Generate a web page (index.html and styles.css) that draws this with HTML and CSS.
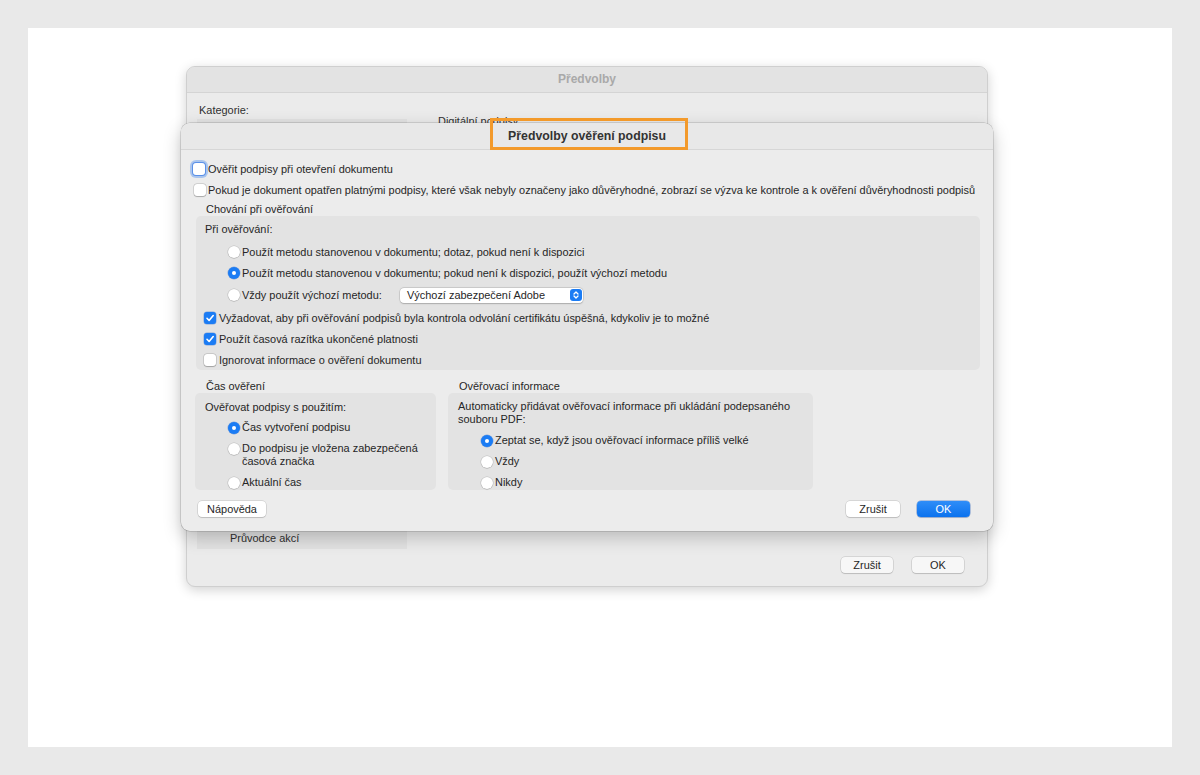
FILE: index.html
```html
<!DOCTYPE html>
<html lang="cs">
<head>
<meta charset="utf-8">
<title>Předvolby ověření podpisu</title>
<link rel="stylesheet" href="styles.css">
</head>
<body>
<div class="page">
  <div class="shot">
    <div class="win">
      <div class="win-title">Předvolby</div>
      <div class="win-body">
        <div class="win-cols">
          <div class="win-left">
            <div class="lbl">Kategorie:</div>
            <div class="catlist"><div class="cat">Průvodce akcí</div></div>
          </div>
          <div class="win-right"><div class="pane-title">Digitální podpisy</div></div>
        </div>
        <div class="win-buttons"><div class="btn btn-inactive">Zrušit</div><div class="btn btn-inactive">OK</div></div>
      </div>
    </div>

    <div class="sheet">
      <div class="sheet-title">Předvolby ověření podpisu<div class="hl"></div></div>
      <div class="sheet-body">
        <div class="row"><span class="cb focus"></span><span>Ověřit podpisy při otevření dokumentu</span></div>
        <div class="row"><span class="cb cb-2"></span><span>Pokud je dokument opatřen platnými podpisy, které však nebyly označeny jako důvěryhodné, zobrazí se výzva ke kontrole a k ověření důvěryhodnosti podpisů</span></div>
        <div class="sec-label">Chování při ověřování</div>
        <div class="group">
          <div class="glabel">Při ověřování:</div>
          <div class="row ind"><span class="rb"></span><span>Použít metodu stanovenou v dokumentu; dotaz, pokud není k dispozici</span></div>
          <div class="row ind"><span class="rb on"></span><span>Použít metodu stanovenou v dokumentu; pokud není k dispozici, použít výchozí metodu</span></div>
          <div class="row ind row-pop"><span class="rb"></span><span class="plabel">Vždy použít výchozí metodu:</span>
            <div class="popup"><span>Výchozí zabezpečení Adobe</span><span class="chev"><svg viewBox="0 0 12 12" width="12" height="12"><path d="M4 5 L6 3 L8 5 M4 7 L6 9 L8 7" fill="none" stroke="#fff" stroke-width="1.3" stroke-linecap="round" stroke-linejoin="round"/></svg></span></div>
          </div>
          <div class="row"><span class="cb on"><svg viewBox="0 0 12 12" width="12" height="12"><path d="M3 6.3 L5.1 8.5 L9.2 3.5" fill="none" stroke="#fff" stroke-width="1.6" stroke-linecap="round" stroke-linejoin="round"/></svg></span><span>Vyžadovat, aby při ověřování podpisů byla kontrola odvolání certifikátu úspěšná, kdykoliv je to možné</span></div>
          <div class="row"><span class="cb on"><svg viewBox="0 0 12 12" width="12" height="12"><path d="M3 6.3 L5.1 8.5 L9.2 3.5" fill="none" stroke="#fff" stroke-width="1.6" stroke-linecap="round" stroke-linejoin="round"/></svg></span><span>Použít časová razítka ukončené platnosti</span></div>
          <div class="row"><span class="cb"></span><span>Ignorovat informace o ověření dokumentu</span></div>
        </div>

        <div class="lower">
          <div class="col col-left">
            <div class="col-title">Čas ověření</div>
            <div class="sgroup">
              <div class="sg-label">Ověřovat podpisy s použitím:</div>
              <div class="srow first"><span class="rb on"></span><span>Čas vytvoření podpisu</span></div>
              <div class="srow"><span class="rb"></span><span>Do podpisu je vložena zabezpečená<br>časová značka</span></div>
              <div class="srow"><span class="rb"></span><span>Aktuální čas</span></div>
            </div>
          </div>
          <div class="col col-right">
            <div class="col-title">Ověřovací informace</div>
            <div class="sgroup">
              <div class="sg-label2">Automaticky přidávat ověřovací informace při ukládání podepsaného<br>souboru PDF:</div>
              <div class="srow"><span class="rb on"></span><span>Zeptat se, když jsou ověřovací informace příliš velké</span></div>
              <div class="srow"><span class="rb"></span><span>Vždy</span></div>
              <div class="srow"><span class="rb"></span><span>Nikdy</span></div>
            </div>
          </div>
        </div>

        <div class="footer">
          <div class="btn btn-help">Nápověda</div>
          <div class="btn-group">
            <div class="btn btn-cancel">Zrušit</div>
            <div class="btn btn-ok">OK</div>
          </div>
        </div>
      </div>
    </div>
  </div>
</div>
</body>
</html>
```

FILE: styles.css
```css
* { box-sizing: border-box; margin: 0; padding: 0; }

body {
  background: #e9e9e9;
  font-family: "Liberation Sans", Arial, sans-serif;
  font-size: 10.95px;
  color: #262626;
}

.page {
  margin: 28px;
  width: 1144px;
  height: 719px;
  background: #fff;
  padding: 32px 0 0 151px;
}

.shot {
  position: relative;
  width: 819px;
  height: 536px;
  background: #fff;
  padding: 6px 0 0 7px;
}

/* Outer window */
.win {
  width: 802px;
  height: 521px;
  border-radius: 9px;
  background: #ebebeb;
  border: 1px solid #cfcfcf;
  box-shadow: 0 3px 12px rgba(0, 0, 0, 0.18);
  display: flex;
  flex-direction: column;
  overflow: hidden;
}

.win-title {
  flex: none;
  height: 26px;
  background: #e3e3e3;
  border-bottom: 1px solid #d4d4d4;
  text-align: center;
  font-weight: bold;
  font-size: 12px;
  line-height: 25px;
  color: #a9a9a9;
}

.win-body {
  flex: 1;
  display: flex;
  flex-direction: column;
  padding: 10px 23px 13px 10px;
}

.win-cols {
  flex: 1;
  display: flex;
}

.win-left {
  width: 210px;
  display: flex;
  flex-direction: column;
}

.lbl {
  padding-left: 2px;
  line-height: 14px;
  color: #303030;
}

.catlist {
  flex: 1;
  margin-top: 2px;
  background: #e2e2e2;
  display: flex;
  flex-direction: column;
  justify-content: flex-end;
  padding: 0 0 4px 33px;
}

.cat {
  line-height: 14px;
  color: #303030;
}

.win-right {
  padding: 11px 0 0 31px;
}

.pane-title {
  line-height: 14px;
  color: #303030;
}

.win-buttons {
  display: flex;
  justify-content: flex-end;
  gap: 19px;
  margin-top: 8px;
}

/* Buttons */
.btn {
  height: 16px;
  line-height: 16px;
  text-align: center;
  background: #fff;
  border-radius: 4px;
  box-shadow: 0 0 0 0.5px rgba(0, 0, 0, 0.18), 0 1px 1px rgba(0, 0, 0, 0.12);
  color: #262626;
}

.btn-inactive {
  width: 52px;
  background: #f7f7f7;
}

/* Sheet */
.sheet {
  position: absolute;
  left: 2px;
  top: 63px;
  width: 812px;
  height: 408px;
  background: #ececec;
  border-radius: 9px;
  box-shadow: 0 0 0 0.5px rgba(0, 0, 0, 0.22), 0 6px 18px rgba(0, 0, 0, 0.22);
  display: flex;
  flex-direction: column;
}

.sheet-title {
  position: relative;
  flex: none;
  height: 27px;
  background: #e8e8e8;
  border-bottom: 1px solid #d6d6d6;
  border-radius: 9px 9px 0 0;
  text-align: center;
  font-weight: bold;
  font-size: 12.3px;
  line-height: 26px;
  color: #333;
}

.hl {
  position: absolute;
  left: 309px;
  top: -5px;
  width: 198px;
  height: 32px;
  border: 3px solid #f39a2b;
}

.sheet-body {
  flex: 1;
  display: flex;
  flex-direction: column;
  padding: 8px 13px 13px 12px;
}

.row {
  display: flex;
  align-items: center;
  height: 21px;
  white-space: nowrap;
}

.cb {
  flex: none;
  width: 12px;
  height: 12px;
  border-radius: 3px;
  background: #fff;
  box-shadow: 0 0 0 0.5px rgba(0, 0, 0, 0.2), 0 0.5px 1px rgba(0, 0, 0, 0.2);
  margin-right: 3px;
  display: flex;
}

.cb.cb-2 {
  margin-left: 1px;
  margin-right: 2px;
}

.cb.focus {
  box-shadow: 0 0 0 1px rgba(70, 130, 230, 0.8), 0 0 0 3px rgba(90, 150, 240, 0.45);
}

.cb.on {
  background: #1b7cf4;
  box-shadow: 0 0 0 0.5px rgba(0, 80, 200, 0.4);
}

.rb {
  flex: none;
  width: 12px;
  height: 12px;
  border-radius: 50%;
  background: #fff;
  box-shadow: 0 0 0 0.5px rgba(0, 0, 0, 0.16), 0 0.5px 1px rgba(0, 0, 0, 0.18);
  margin-right: 2px;
  position: relative;
}

.rb.on {
  background: #1b7cf4;
  box-shadow: 0 0 0 0.5px rgba(0, 80, 200, 0.4);
}

.rb.on::after {
  content: "";
  position: absolute;
  left: 4px;
  top: 4px;
  width: 4px;
  height: 4px;
  border-radius: 50%;
  background: #fff;
}

.sec-label {
  margin: 2px 0 0 13px;
  line-height: 14px;
}

.group {
  margin-left: 3px;
  width: 784px;
  background: #e3e3e3;
  border-radius: 5px;
  padding: 6px 0 0 8px;
}

.glabel {
  margin-left: 1px;
  line-height: 14px;
  margin-bottom: 5px;
}

.row.ind {
  padding-left: 24px;
}

.row-pop {
  height: 24px;
}

.plabel {
  width: 158px;
}

.popup {
  width: 183px;
  height: 15px;
  background: #fff;
  border-radius: 4px;
  box-shadow: 0 0 0 0.5px rgba(0, 0, 0, 0.16), 0 0.5px 1.5px rgba(0, 0, 0, 0.18);
  display: flex;
  align-items: center;
  justify-content: space-between;
  padding: 0 1px 0 7px;
}

.chev {
  width: 12px;
  height: 12px;
  border-radius: 3px;
  background: #1b7cf4;
  display: flex;
}

.lower {
  display: flex;
  gap: 12px;
  margin-left: 2px;
}

.col {
  display: flex;
  flex-direction: column;
}

.col-left { width: 241px; }
.col-right { width: 365px; }

.col-title {
  margin-top: 9px;
  padding-left: 11px;
  line-height: 14px;
}

.sgroup {
  flex: 1;
  background: #e3e3e3;
  border-radius: 5px;
  padding: 7px 0 1px 10px;
}

.sg-label {
  line-height: 14px;
}

.sg-label2 {
  line-height: 13px;
}

.srow {
  display: flex;
  align-items: flex-start;
  line-height: 13px;
  margin-top: 8px;
  padding-left: 23px;
}

.srow.first {
  margin-top: 7px;
}

.srow .rb {
  margin-top: 0.5px;
  margin-right: 2px;
}

.footer {
  display: flex;
  justify-content: space-between;
  margin: 11px 10px 0 5px;
}

.btn-help { width: 68px; }

.btn-group {
  display: flex;
  gap: 17px;
}

.btn-cancel { width: 54px; }

.btn-ok {
  width: 53px;
  color: #fff;
  background: linear-gradient(#2f8df8, #0b72ee);
  box-shadow: 0 0 0 0.5px rgba(0, 70, 180, 0.5), 0 1px 1px rgba(0, 0, 0, 0.12);
}
```
